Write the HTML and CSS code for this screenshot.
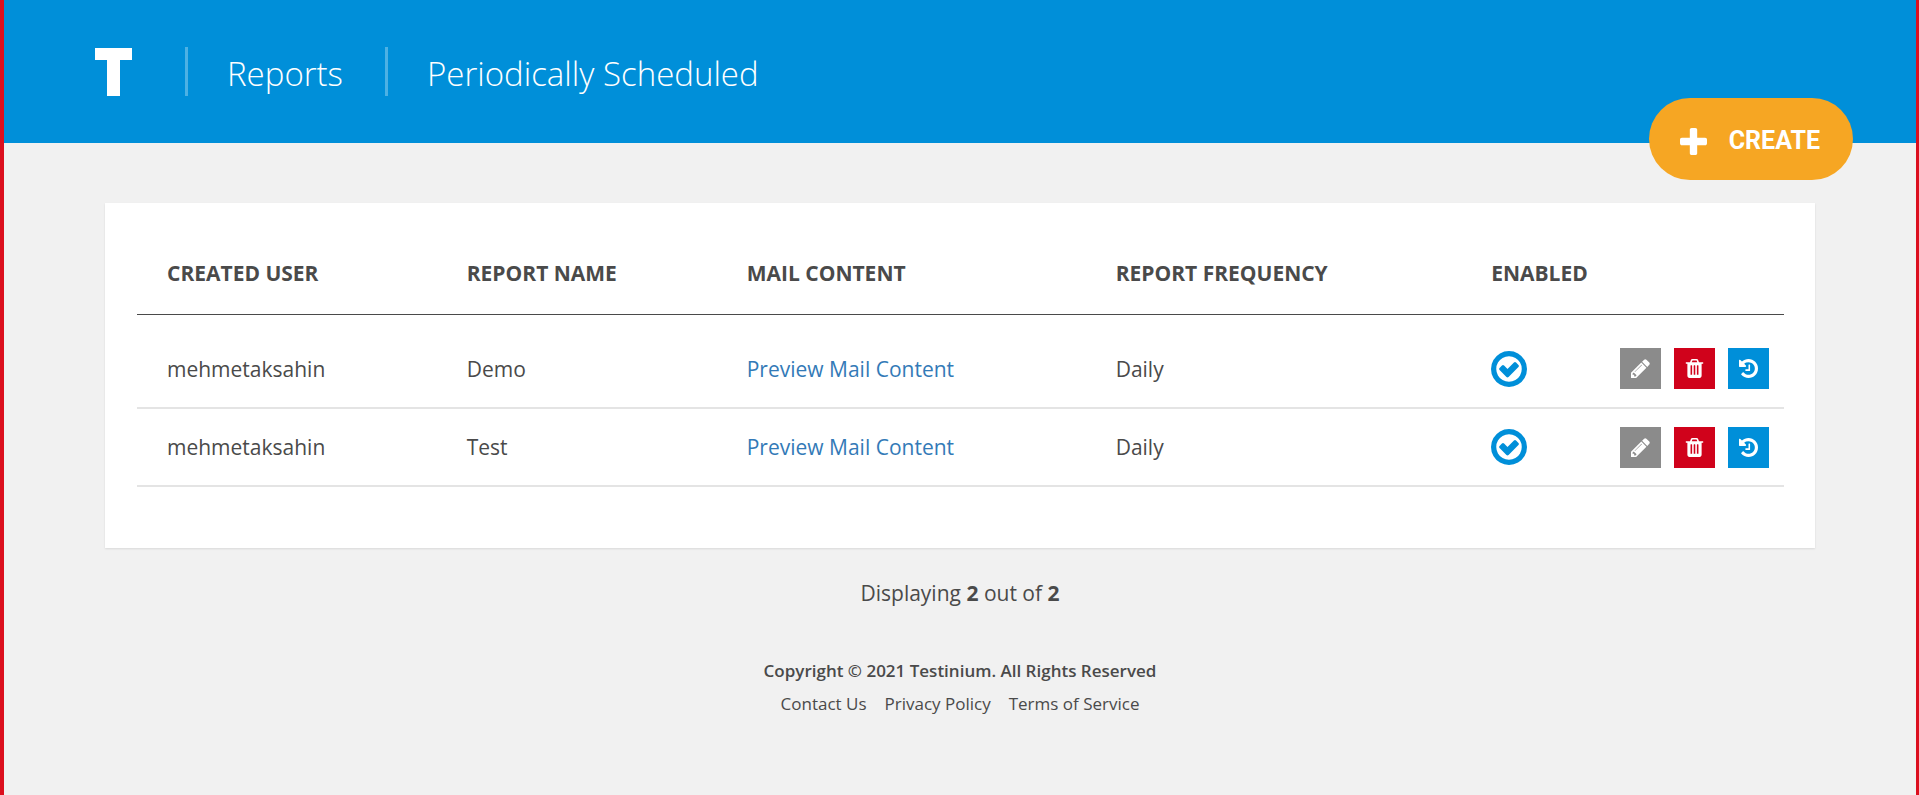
FILE: index.html
```html
<!DOCTYPE html>
<html lang="en">
<head>
<meta charset="utf-8">
<title>Periodically Scheduled Reports</title>
<link rel="stylesheet" href="styles.css">
</head>
<body>
<svg class="sprite" aria-hidden="true">
  <symbol id="i-plus" viewBox="192 128 1408 1408"><path d="M1600 736v192q0 40-28 68t-68 28h-416v416q0 40-28 68t-68 28h-192q-40 0-68-28t-28-68v-416h-416q-40 0-68-28t-28-68v-192q0-40 28-68t68-28h416v-416q0-40 28-68t68-28h192q40 0 68 28t28 68v416h416q40 0 68 28t28 68z"/></symbol>
  <symbol id="i-check" viewBox="128 128 1536 1536"><path d="M1299 813l-422 422q-19 19-45 19t-45-19l-294-294q-19-19-19-45t19-45l102-102q19-19 45-19t45 19l147 147 275-275q19-19 45-19t45 19l102 102q19 19 19 45t-19 45zm141 83q0-148-73-273t-198-198-273-73-273 73-198 198-73 273 73 273 198 198 273 73 273-73 198-198 73-273zm224 0q0 209-103 385.500t-279.500 279.500-385.500 103-385.500-103-279.500-279.500-103-385.500 103-385.500 279.500-279.500 385.500-103 385.500 103 279.500 279.500 103 385.500z"/></symbol>
  <symbol id="i-pencil" viewBox="128 128 1536 1536"><path d="M491 1536l91-91-235-235-91 91v107h128v128h107zm523-928q0-22-22-22-10 0-17 7l-542 542q-7 7-7 17 0 22 22 22 10 0 17-7l542-542q7-7 7-17zm-54-192l416 416-832 832h-416v-416zm683 96q0 53-37 90l-166 166-416-416 166-165q36-38 90-38 53 0 91 38l235 234q37 39 37 91z"/></symbol>
  <symbol id="i-trash" viewBox="128 128 1536 1536"><path d="M704 1376v-704q0-14-9-23t-23-9h-64q-14 0-23 9t-9 23v704q0 14 9 23t23 9h64q14 0 23-9t9-23zm256 0v-704q0-14-9-23t-23-9h-64q-14 0-23 9t-9 23v704q0 14 9 23t23 9h64q14 0 23-9t9-23zm256 0v-704q0-14-9-23t-23-9h-64q-14 0-23 9t-9 23v704q0 14 9 23t23 9h64q14 0 23-9t9-23zm-544-992h448l-48-117q-7-9-17-11h-317q-10 2-17 11zm928 32v64q0 14-9 23t-23 9h-96v948q0 83-47 143.500t-113 60.500h-832q-66 0-113-58.500t-47-141.500v-952h-96q-14 0-23-9t-9-23v-64q0-14 9-23t23-9h309l70-167q15-37 54-63t79-26h320q40 0 79 26t54 63l70 167h309q14 0 23 9t9 23z"/></symbol>
  <symbol id="i-history" viewBox="128 128 1536 1536"><path d="M1664 896q0 156-61 298t-164 245-245 164-298 61q-172 0-327-72.500t-264-204.500q-7-10-6.500-22.500t8.500-20.500l137-138q10-9 25-9 16 2 23 12 73 95 179 147t225 52q104 0 198.500-40.500t163.500-109.500 109.500-163.500 40.500-198.500-40.500-198.500-109.500-163.500-163.500-109.500-198.500-40.500q-98 0-188 35.500t-160 101.500l137 138q31 30 14 69-17 40-59 40h-448q-26 0-45-19t-19-45v-448q0-42 40-59 39-17 69 14l130 129q107-101 244.500-156.500t284.500-55.500q156 0 298 61t245 164 164 245 61 298zm-640-288v448q0 14-9 23t-23 9h-320q-14 0-23-9t-9-23v-64q0-14 9-23t23-9h224v-352q0-14 9-23t23-9h64q14 0 23 9t9 23z"/></symbol>
</svg>
<header class="topbar">
  <a class="logo" href="#" aria-label="Testinium">
    <svg width="37" height="48" viewBox="0 0 37 48"><rect width="37" height="12"/><rect x="12" width="13" height="48"/></svg>
  </a>
  <nav class="crumbs">
    <a class="crumb" href="#">Reports</a>
    <a class="crumb" href="#">Periodically Scheduled</a>
  </nav>
  <button class="create" type="button"><svg class="create-icon"><use href="#i-plus"/></svg>CREATE</button>
</header>
<main class="content">
  <section class="card">
    <table class="reports">
      <colgroup><col class="c-user"><col class="c-name"><col class="c-mail"><col class="c-freq"><col class="c-enabled"><col></colgroup>
      <thead>
        <tr><th>CREATED USER</th><th>REPORT NAME</th><th>MAIL CONTENT</th><th>REPORT FREQUENCY</th><th>ENABLED</th><td></td></tr>
      </thead>
      <tbody>
        <tr>
          <td>mehmetaksahin</td><td>Demo</td><td><a class="preview" href="#">Preview Mail Content</a></td><td>Daily</td>
          <td><svg class="enabled" role="img" aria-label="Enabled"><use href="#i-check"/></svg></td>
          <td><div class="actions">
            <button class="action edit" type="button" aria-label="Edit"><svg class="icon"><use href="#i-pencil"/></svg></button>
            <button class="action delete" type="button" aria-label="Delete"><svg class="icon"><use href="#i-trash"/></svg></button>
            <button class="action history" type="button" aria-label="History"><svg class="icon"><use href="#i-history"/></svg></button>
          </div></td>
        </tr>
        <tr>
          <td>mehmetaksahin</td><td>Test</td><td><a class="preview" href="#">Preview Mail Content</a></td><td>Daily</td>
          <td><svg class="enabled" role="img" aria-label="Enabled"><use href="#i-check"/></svg></td>
          <td><div class="actions">
            <button class="action edit" type="button" aria-label="Edit"><svg class="icon"><use href="#i-pencil"/></svg></button>
            <button class="action delete" type="button" aria-label="Delete"><svg class="icon"><use href="#i-trash"/></svg></button>
            <button class="action history" type="button" aria-label="History"><svg class="icon"><use href="#i-history"/></svg></button>
          </div></td>
        </tr>
      </tbody>
    </table>
  </section>
  <p class="count">Displaying <b>2</b> out of <b>2</b></p>
</main>
<footer class="footer">
  <p class="copyright">Copyright © 2021 Testinium. All Rights Reserved</p>
  <nav class="links"><a href="#">Contact Us</a><a href="#">Privacy Policy</a><a href="#">Terms of Service</a></nav>
</footer>
</body>
</html>
```
FILE: styles.css
```css
* { box-sizing: border-box; }
body {
  margin: 0;
  min-height: 100vh;
  border-left: 4px solid #dc0f1e;
  border-right: 3px solid #dc0f1e;
  background: #f1f1f1;
  color: #4a4a4a;
  font: 400 21px/30px "Open Sans", sans-serif;
}
a { color: inherit; text-decoration: none; }
p { margin: 0; }
.sprite { display: none; }

.topbar {
  position: relative;
  display: flex;
  align-items: center;
  height: 143px;
  padding: 0 91px;
  background: #008fd9;
  color: #fff;
}
.logo svg { display: block; fill: #fff; }
.crumbs { display: flex; padding-left: 53px; }
.crumb {
  padding: 4px 42px 0 39px;
  border-left: 3px solid #4db1e4;
  font-size: 33px;
  font-weight: 300;
  line-height: 45px;
}
.create {
  position: absolute;
  right: 63px;
  bottom: -37px;
  display: flex;
  align-items: center;
  gap: 22px;
  height: 82px;
  padding: 4px 33px 0 31px;
  border: 0;
  border-radius: 41px;
  background: #f6a623;
  color: #fff;
  font: 700 25px/30px Roboto, sans-serif;
}
.create-icon { width: 27px; height: 27px; fill: currentColor; }

.content { padding: 60px 101px 0; }
.card {
  padding: 32px 31px 61px 32px;
  background: #fff;
  box-shadow: 0 1px 2px rgba(0, 0, 0, .1);
}
.reports { width: 100%; border-collapse: separate; border-spacing: 0; table-layout: fixed; }
.c-user { width: 18.2%; }
.c-name { width: 17%; }
.c-mail { width: 22.4%; }
.c-freq { width: 22.8%; }
.c-enabled { width: 8%; }
.reports th, .reports td { padding: 0 0 0 30px; text-align: left; }
.reports td:last-child { padding-left: 0; }
.reports thead th, .reports thead td { height: 80px; padding-bottom: 3px; border-bottom: 1px solid #4a4a4a; font-weight: 700; white-space: nowrap; }
.reports tbody td { height: 78px; border-bottom: 2px solid #e4e4e4; }
.reports tbody tr:first-child td { height: 94px; padding-top: 15px; }
.preview { color: #337ab7; }
.enabled { display: block; width: 36px; height: 36px; fill: #008fd9; }
.actions { display: flex; justify-content: flex-end; gap: 13px; padding-right: 15px; }
.action {
  display: grid;
  flex: none;
  place-items: center;
  width: 41px;
  height: 41px;
  padding: 0;
  border: 0;
  color: #fff;
}
.edit { background: #8b8b8b; }
.delete { background: #d0021b; }
.history { background: #008fd9; }
.icon { width: 19px; height: 19px; fill: currentColor; }

.count { padding-top: 30px; text-align: center; }
.count b { font-weight: 700; }
.footer { padding: 46px 0; text-align: center; font-size: 17px; line-height: 33px; }
.copyright { font-weight: 600; }
.links { display: flex; justify-content: center; gap: 18px; }
```
